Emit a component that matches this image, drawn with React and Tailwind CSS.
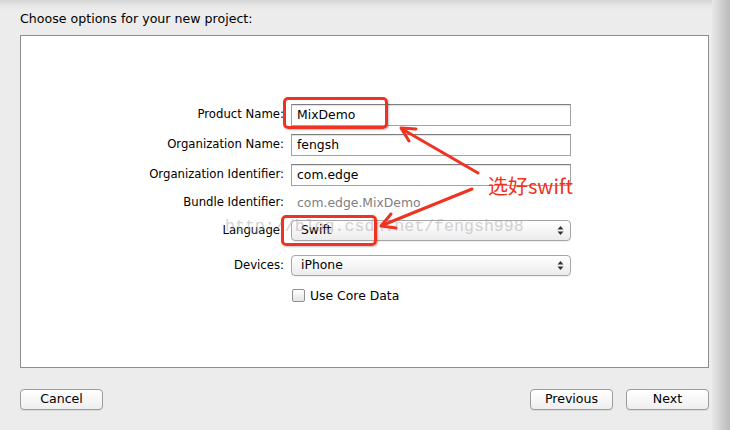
import { useState } from 'react'

const ui = { fontFamily: '"DejaVu Sans", "Lucida Grande", sans-serif' }

function TextField({ value }) {
  return (
    <div className="h-[22px] w-[280px] border border-[#a3a3a3] border-t-[#7d7d7d] bg-white px-[5px] flex items-center text-[12.4px] text-black shadow-[inset_0_1px_1px_rgba(0,0,0,0.12)]">
      {value}
    </div>
  )
}

function Popup({ value }) {
  return (
    <div className="h-[21px] w-[280px] rounded-[4px] border border-[#a6a6a6] bg-gradient-to-b from-white to-[#ececec] pl-[9px] pr-[6px] flex items-center justify-between text-[12.4px] text-black shadow-[0_1px_0_rgba(0,0,0,0.06)]">
      <span>{value}</span>
      <svg width="7" height="11" viewBox="0 0 7 11">
        <path d="M3.5 1 L6.5 4.5 H0.5 Z" fill="#333" />
        <path d="M3.5 10 L6.5 6.5 H0.5 Z" fill="#333" />
      </svg>
    </div>
  )
}

function Row({ label, children, className = '' }) {
  return (
    <div className={'flex items-center ' + className}>
      <div className="w-[143px] text-right text-[11.7px] text-black whitespace-nowrap">{label}</div>
      <div className="ml-[7px]">{children}</div>
    </div>
  )
}

function MacButton({ children, className = '' }) {
  return (
    <button className={'h-[21px] w-[83px] rounded-[4px] border border-[#9c9c9c] bg-gradient-to-b from-white to-[#efefef] text-[12.6px] text-black shadow-[0_1px_0_rgba(0,0,0,0.08)] ' + className}>
      {children}
    </button>
  )
}

export default function App() {
  const [coreData, setCoreData] = useState(false)

  return (
    <div className="relative w-[730px] h-[430px] overflow-hidden flex bg-[#ececec]" style={ui}>
      <div className="flex-1 flex flex-col bg-[linear-gradient(to_bottom,#d4d4d4_0px,#e6e6e6_5px,#ececec_10px)]">
        <div className="h-[35px] pl-[20px] pt-[10px] text-[12.6px] text-black">Choose options for your new project:</div>

        <div className="ml-[20px] mr-[3px] h-[333px] border border-[#8e8e8e] bg-white">
          <div className="pt-[68px] pl-[120px]">
            <Row label="Product Name:">
              <TextField value="MixDemo" />
            </Row>
            <Row label="Organization Name:" className="mt-[8px]">
              <TextField value="fengsh" />
            </Row>
            <Row label="Organization Identifier:" className="mt-[8px]">
              <TextField value="com.edge" />
            </Row>
            <Row label="Bundle Identifier:" className="mt-[6px] h-[22px]">
              <div className="pl-[6px] text-[12.4px] text-[#808080]">com.edge.MixDemo</div>
            </Row>
            <Row label="Language:" className="mt-[6px]">
              <Popup value="Swift" />
            </Row>
            <Row label="Devices:" className="mt-[14px]">
              <Popup value="iPhone" />
            </Row>
            <Row label="" className="mt-[9px] h-[22px]">
              <label className="flex items-center pl-[1px] cursor-default">
                <span
                  onClick={() => setCoreData(!coreData)}
                  className="w-[13px] h-[13px] rounded-[2px] border border-[#8f8f8f] bg-gradient-to-b from-white to-[#e4e4e4] flex items-center justify-center text-[10px] leading-none"
                >
                  {coreData ? '✓' : ''}
                </span>
                <span className="ml-[5px] text-[12.4px] text-black">Use Core Data</span>
              </label>
            </Row>
          </div>
        </div>

        <div className="flex items-center pl-[20px] pr-[3px] pt-[21px]">
          <MacButton>Cancel</MacButton>
          <div className="flex-1" />
          <MacButton>Previous</MacButton>
          <MacButton className="ml-[13px]">Next</MacButton>
        </div>
      </div>
      <div className="w-[18px] bg-gradient-to-r from-[#e8e8e8] to-[#bababa]" />

      {/* watermark */}
      <div className="absolute left-[225px] top-[215px] text-[16.6px] text-[#a8a8a8] opacity-50 whitespace-nowrap pointer-events-none" style={{ fontFamily: '"Liberation Mono", monospace' }}>
        http://blog.csdn.net/fengsh998
      </div>

      {/* annotations */}
      <div className="absolute left-[283px] top-[97px] w-[105px] h-[32px] rounded-[5px] border-[3px] border-[#ee3322] shadow-[1px_1px_2px_rgba(0,0,0,0.25)] pointer-events-none" />
      <div className="absolute left-[281px] top-[215px] w-[96px] h-[31px] rounded-[5px] border-[3px] border-[#ee3322] shadow-[1px_1px_2px_rgba(0,0,0,0.25)] pointer-events-none" />
      <svg className="absolute left-0 top-0 pointer-events-none" width="730" height="430">
        <g stroke="#ee3322" strokeWidth="3" fill="none" strokeLinecap="round" strokeLinejoin="round">
          <line x1="478" y1="173" x2="402" y2="129" />
          <polyline points="409,141 401,128 416,129" />
          <line x1="472" y1="189" x2="383" y2="225" />
          <polyline points="391,214 381,226 396,228" />
        </g>
      </svg>
      <div className="absolute left-[488px] top-[172px] text-[20px] leading-[28px] text-[#ee3322] whitespace-nowrap" style={{ fontFamily: '"Noto Sans CJK SC", "Noto Sans", sans-serif' }}>
        选好swift
      </div>
    </div>
  )
}
